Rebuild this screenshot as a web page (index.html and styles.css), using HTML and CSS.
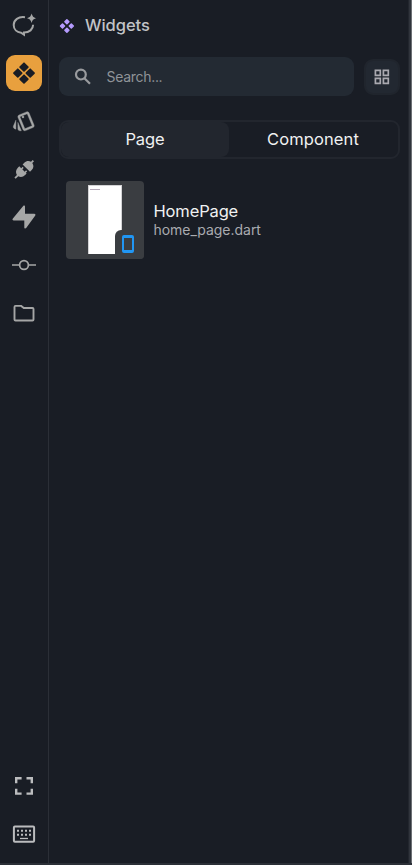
FILE: index.html
```html
<!DOCTYPE html>
<html lang="en">
<head>
<meta charset="utf-8">
<title>Widgets</title>
<link rel="stylesheet" href="styles.css">
</head>
<body>
<div class="app">
  <nav class="rail">
    <div class="item"><svg viewBox="0 0 24 24" class="line"><path d="M13 4.200C6.400 3.200 1.700 7 1.700 12c0 4.300 3.200 7.200 7.300 7.700l3 2v-2.100c5.300-.1 9.100-3.200 9.100-7.900" stroke-width="2"/><path class="solid" d="M19.600.6c.9 3 1.700 3.800 4.400 4.700-2.700.9-3.500 1.700-4.400 4.700-.9-3-1.700-3.800-4.600-4.700 2.900-.9 3.700-1.700 4.600-4.700z"/></svg></div>
    <div class="item active"><svg viewBox="0 0 24 24" class="joined"><path d="M12 2.200 15.900 6.100 12 10 8.100 6.100zM5.800 8.200 9.700 12.100 5.800 16 1.900 12.100zM18.200 8.200 22.100 12.100 18.200 16 14.300 12.100zM12 14.200 15.900 18.100 12 22 8.100 18.100z"/></svg></div>
    <div class="item"><svg viewBox="0 0 24 24" class="cards"><path d="m2.530 19.650 1.340.56v-9.030l-2.430 5.860c-.41 1.020.08 2.190 1.090 2.610zm19.500-3.700L17.070 3.980c-.31-.75-1.040-1.210-1.810-1.230-.26 0-.53.04-.79.15L7.100 5.950c-.75.31-1.210 1.030-1.230 1.800-.01.27.04.54.15.8l4.960 11.970c.31.76 1.050 1.220 1.830 1.230.26 0 .52-.05.77-.15l7.360-3.050c1.020-.42 1.510-1.590 1.090-2.600zm-9.200 3.800L7.870 7.790l7.350-3.040h.01l4.950 11.950-7.350 3.050zM11 9c.55 0 1-.45 1-1s-.45-1-1-1-1 .45-1 1 .45 1 1 1zM5.880 19.750c0 1.100.9 2 2 2h1.450l-3.450-8.340v6.340z"/></svg></div>
    <div class="item plug"><svg viewBox="0 0 24 24"><path d="m20.700 2 1.300 1.300-1.700 1.700c1.700 2.500 1.400 5.100-.6 7.100l-1.700 1.700-7.400-7.400 1.700-1.700c2-2 4.500-2.300 6.700-1zM7.300 8.300l1.900 1.900 1.400-1.400 1.100 1.100-1.400 1.400 2.400 2.400 1.400-1.400 1.100 1.100-1.400 1.400.8.8-1.500 1.500c-2 2-4.600 2.500-6.800 1.100l-2.600 2.500-1.300-1.300 2.500-2.500c-1.500-2.200-1.100-4.900.9-7.100z"/></svg></div>
    <div class="item"><svg viewBox="0 0 24 24"><path d="M11.200.9c.8-.8 1.800-.4 1.800.6v7.300h9.200c1.300 0 1.700 1.100.9 2L14.200 23c-.8.9-1.900.5-1.900-.6v-7H1.800c-1.300 0-1.800-1.100-.9-2z"/></svg></div>
    <div class="item"><svg viewBox="0 0 24 24" class="line"><circle cx="12" cy="12" r="4.400" stroke-width="1.700"/><path d="M0 12h7.500m9 0H24" stroke-width="1.500"/></svg></div>
    <div class="item"><svg viewBox="0 0 24 24" class="line"><path d="M3.500 4.900h5.700L11.800 7h8.700c.6 0 1 .4 1 1v10.500c0 .6-.4 1-1 1h-17c-.6 0-1-.4-1-1V5.900c0-.6.4-1 1-1z" stroke-width="1.900"/></svg></div>
    <div class="item expand"><svg viewBox="0 0 24 24" class="line"><path d="M4.200 9.300V4.200H9.600m4.900 0h5.300v5.100m0 5.400v4.900H14.500m-4.900 0H4.200v-4.900" stroke-width="2.400"/></svg></div>
    <div class="item"><svg viewBox="0 0 24 24" class="line"><rect x="1.900" y="4.400" width="20.200" height="15.300" rx="1" stroke-width="2"/><path d="M5 8.800h14.500M5 12.800h14.500" stroke-width="2" stroke-dasharray="2"/><path d="M8 16.500h8" stroke-width="1.300"/></svg></div>
  </nav>
  <main class="panel">
    <header class="title"><svg viewBox="0 0 16 16" class="joined"><path d="M7.900 1.800 9.900 3.800 7.900 5.800 5.900 3.800zM3.500 6 5.500 8 3.500 10 1.500 8zM12.300 6 14.300 8 12.300 10 10.300 8zM7.900 10.200 9.900 12.200 7.900 14.200 5.900 12.200z"/></svg><span>Widgets</span></header>
    <div class="tools">
      <div class="search"><svg viewBox="0 0 18 18"><circle cx="6.900" cy="6.600" r="4.900"/><path d="m10.400 10.200 5.600 5.600"/></svg><span>Search...</span></div>
      <div class="grid"><svg viewBox="0 0 16 16"><path d="M1.400 1.400h4.900v4.900H1.400zM9.400 1.400h4.900v4.900H9.400zM1.400 9.400h4.900v4.900H1.400zM9.400 9.400h4.900v4.900H9.400z"/></svg></div>
    </div>
    <div class="tabs"><div class="tab selected">Page</div><div class="tab component">Component</div></div>
    <div class="entry">
      <div class="thumb"><div class="preview"><i></i></div><div class="badge"><svg viewBox="0 0 14 20"><rect x="2" y="2" width="10" height="16" rx="1"/><path d="M2 3h10M2 17h10"/></svg></div></div>
      <div class="text"><div class="name">HomePage</div><div class="file">home_page.dart</div></div>
    </div>
  </main>
</div>
</body>
</html>
```
FILE: styles.css
```css
* { box-sizing: border-box; }
body { margin: 0; background: #191d25; font-family: Inter, sans-serif; }
svg { display: block; flex: none; }
.app { display: flex; width: 412px; height: 865px; border-bottom: 2px solid #2b2f37; overflow: hidden; }
.rail { width: 49px; height: 865px; flex: none; display: flex; flex-direction: column; padding: 7px 6px 13px; gap: 12px; border-right: 1px solid #2b2f37; }
.item { width: 36px; height: 36px; flex: none; display: flex; align-items: center; justify-content: center; color: #a5a6a6; }
.item svg { width: 24px; height: 24px; fill: currentColor; }
.item svg.line { fill: none; stroke: currentColor; }
.item svg .solid { fill: currentColor; stroke: none; }
.item svg.cards { stroke: currentColor; stroke-width: .4; }
.plug { padding-top: 2px; }
.joined { stroke: currentColor; stroke-width: 1.600; stroke-linejoin: round; fill: currentColor; }
.active { background: #e8a03e; color: #191d25; border-radius: 9px; }
.expand { margin-top: auto; color: #bbbcbe; }
.expand + .item { color: #bbbcbe; }
.panel { flex: 1; height: 865px; padding: 13px 9px 0 10px; border-right: 2px solid #30343c; box-shadow: inset -1px 0 #22262e; margin-right: 1px; outline: 1px solid transparent; }
.app { background: linear-gradient(to left, #6d7075 1px, transparent 1px); }
.title { display: flex; align-items: center; height: 24px; gap: 10px; color: #c2c4c7; font-size: 16.500px; font-weight: 500; }
.title svg { width: 16px; height: 16px; color: #b69cff; margin-top: 2px; }
.title .joined { stroke-width: 1.500; }
.title span { letter-spacing: -.05px; }
.tools { display: flex; align-items: center; gap: 10px; margin-top: 20px; }
.search { width: 295px; height: 39px; flex: none; background: #232a33; border-radius: 9px; display: flex; align-items: center; padding-left: 15px; gap: 14.500px; color: #8f9398; font-size: 14px; letter-spacing: -.3px; }
.search span { margin-top: -1px; }
.search svg { width: 18px; height: 18px; fill: none; stroke: #999b9e; stroke-width: 2.200; }
.grid { width: 36px; height: 36px; flex: none; background: #222831; border: 2px solid #20252d; border-radius: 9px; display: flex; align-items: center; justify-content: center; }
.grid svg { width: 16px; height: 16px; fill: none; stroke: #aaa9b0; stroke-width: 1.700; }
.tabs { display: flex; height: 39px; margin-top: 24px; width: 341px; border: 2px solid #22262e; border-radius: 9px; color: #f0f1f2; font-size: 16.500px; }
.tab { width: 168px; display: flex; align-items: center; justify-content: center; padding-bottom: 2px; letter-spacing: -.1px; }
.component { letter-spacing: .1px; }
.selected { background: #22262e; border-radius: 8px; }
.entry { display: flex; align-items: center; gap: 9.500px; margin: 22px 0 0 7px; }
.thumb { position: relative; width: 78px; height: 78px; background: #3a3d41; border-radius: 4px; display: flex; justify-content: center; padding-top: 4px; }
.preview { width: 34px; height: 69px; background: #fff; border: 1px solid #d3d3d5; border-bottom: 0; padding: 3px 1px; }
.preview i { display: block; width: 10px; height: 1px; background: #b4a9b8; }
.badge { position: absolute; right: 0; bottom: 0; width: 29px; height: 29px; background: #3a3d41; border-radius: 6px 0 4px 0; display: flex; align-items: center; justify-content: center; padding: 0 3px 2px 0; }
.badge svg { width: 14px; height: 20px; fill: none; stroke: #2196f3; stroke-width: 2; }
.text { margin-top: 0; }
.name { color: #f0f1f2; font-size: 16.500px; line-height: 20px; letter-spacing: -.15px; }
.file { color: #a9abb0; font-size: 14px; line-height: 18px; letter-spacing: -.03px; }
```
